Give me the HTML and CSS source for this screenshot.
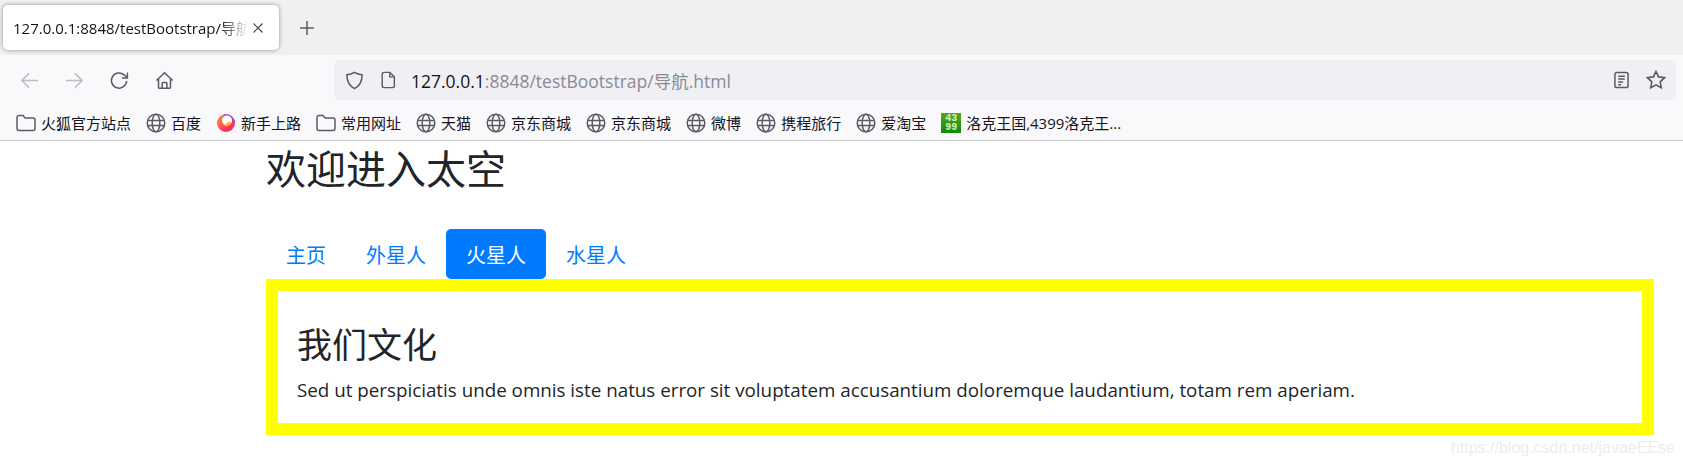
FILE: index.html
```html
<!DOCTYPE html>
<html lang="zh-CN">

<head>
  <meta charset="UTF-8">
  <title>127.0.0.1:8848/testBootstrap/导航.html</title>
  <link rel="stylesheet" href="styles.css">
</head>

<body>
  <div class="tab-strip">
    <div class="tab">
      <span class="tab-title">127.0.0.1:8848/testBootstrap/导航.html</span>
      <svg class="tab-close" viewBox="0 0 12 12"><path d="M1.5 1.5l9 9M10.5 1.5l-9 9" /></svg>
    </div>
    <svg class="new-tab" viewBox="0 0 16 16"><path d="M8 1v14M1 8h14" /></svg>
  </div>

  <div class="toolbar">
    <div class="nav-buttons">
      <svg class="tool-icon faded" viewBox="0 0 20 20"><path d="M19 10H2M9.500 2.500L2 10l7.500 7.500" /></svg>
      <svg class="tool-icon faded" viewBox="0 0 20 20"><path d="M1 10h17M10.500 2.500L18 10l-7.500 7.500" /></svg>
      <svg class="tool-icon" viewBox="0 0 20 20"><path d="M17.500 10.500a8 8 0 1 1-2.600-6.400L18 6.800" /><path d="M18.300 1.500v5.800h-5.800" /></svg>
      <svg class="tool-icon" viewBox="0 0 20 20"><path d="M1.500 10L10 1.800 18.500 10M3.700 8v9.200a1 1 0 0 0 1 1h10.600a1 1 0 0 0 1-1V8" /><path d="M7.500 18v-5a1 1 0 0 1 1-1h3a1 1 0 0 1 1 1v5" /></svg>
    </div>
    <div class="url-bar">
      <svg class="url-icon shield" viewBox="0 0 20 20"><path d="M10 1.500c2.500 1.600 5 2.300 8 2.500 0 6.500-2 11.500-8 14.500C4 15.500 2 10.500 2 4c3-.2 5.500-.9 8-2.500z" /></svg>
      <svg class="url-icon doc" viewBox="0 0 16 20"><path d="M3 1.500h6.500l5 5V16.500a2 2 0 0 1-2 2H3a2 2 0 0 1-2-2V3.500a2 2 0 0 1 2-2z" /><path d="M9.500 1.500v5h5" /></svg>
      <div class="url-text"><span class="url-host">127.0.0.1</span>:8848/testBootstrap/导航.html</div>
      <svg class="url-icon reader" viewBox="0 0 16 18"><rect x="1" y="1" width="14" height="16" rx="2" /><path d="M4.500 5h7M4.500 8h7M4.500 11h5M4.500 14h3" /></svg>
      <svg class="url-icon star" viewBox="0 0 20 20"><path d="M10 1.500l2.600 5.400 5.900.8-4.300 4.100 1 5.900-5.200-2.800-5.200 2.800 1-5.900L1.500 7.700l5.900-.8z" /></svg>
    </div>
  </div>

  <div class="bookmarks">
    <div class="bookmark">
      <svg class="bm-icon" viewBox="0 0 20 20"><use href="#folder" /></svg>火狐官方站点
    </div>
    <div class="bookmark">
      <svg class="bm-icon" viewBox="0 0 20 20"><use href="#globe" /></svg>百度
    </div>
    <div class="bookmark">
      <svg class="bm-icon" viewBox="0 0 20 20">
        <defs>
          <linearGradient id="foxFlame" x1="0" y1="0" x2="1" y2="1">
            <stop offset="0" stop-color="#ff9a3c" />
            <stop offset="0.6" stop-color="#ff3d5a" />
            <stop offset="1" stop-color="#e8257e" />
          </linearGradient>
        </defs>
        <circle class="fox-body" cx="10" cy="10" r="9" />
        <path class="fox-ring" d="M8 2.500a8 8 0 0 1 10 6.500" />
        <circle class="fox-inner" cx="11" cy="7.500" r="5" />
        <path class="fox-core" d="M15 9a5 5 0 0 1-9 2c2 1.500 4 .5 5-1s2.500-1.500 4-1z" />
      </svg>新手上路
    </div>
    <div class="bookmark">
      <svg class="bm-icon" viewBox="0 0 20 20"><use href="#folder" /></svg>常用网址
    </div>
    <div class="bookmark">
      <svg class="bm-icon" viewBox="0 0 20 20"><use href="#globe" /></svg>天猫
    </div>
    <div class="bookmark">
      <svg class="bm-icon" viewBox="0 0 20 20"><use href="#globe" /></svg>京东商城
    </div>
    <div class="bookmark">
      <svg class="bm-icon" viewBox="0 0 20 20"><use href="#globe" /></svg>京东商城
    </div>
    <div class="bookmark">
      <svg class="bm-icon" viewBox="0 0 20 20"><use href="#globe" /></svg>微博
    </div>
    <div class="bookmark">
      <svg class="bm-icon" viewBox="0 0 20 20"><use href="#globe" /></svg>携程旅行
    </div>
    <div class="bookmark">
      <svg class="bm-icon" viewBox="0 0 20 20"><use href="#globe" /></svg>爱淘宝
    </div>
    <div class="bookmark">
      <span class="logo-4399"><span>43</span><span>99</span></span>洛克王国,4399洛克王...
    </div>
  </div>

  <svg class="icon-defs" width="0" height="0">
    <symbol id="folder" viewBox="0 0 20 20">
      <path d="M1 15.500V4.500a2 2 0 0 1 2-2h4l2 2.500h8a2 2 0 0 1 2 2v8.500a2 2 0 0 1-2 2H3a2 2 0 0 1-2-2z" />
    </symbol>
    <symbol id="globe" viewBox="0 0 20 20">
      <circle cx="10" cy="10" r="8.800" />
      <ellipse cx="10" cy="10" rx="3.800" ry="8.800" />
      <path d="M1.500 7.500h17M1.500 12.500h17" />
    </symbol>
  </svg>

  <main class="page">
    <h1 class="page-title">欢迎进入太空</h1>
    <ul class="nav-pills">
      <li class="pill">主页</li>
      <li class="pill">外星人</li>
      <li class="pill active">火星人</li>
      <li class="pill">水星人</li>
    </ul>
    <div class="tab-panel">
      <h3>我们文化</h3>
      <p>Sed ut perspiciatis unde omnis iste natus error sit voluptatem accusantium doloremque laudantium, totam rem aperiam.</p>
    </div>
  </main>

  <div class="watermark">https://blog.csdn.net/javaeEEse</div>
</body>

</html>
```

FILE: styles.css
```css
html,
body {
  margin: 0;
  padding: 0;
  height: 465px;
  overflow: hidden;
}

body {
  font-family: "Open Sans", "Noto Sans CJK SC", sans-serif;
  color: #212529;
  background: #fff;
}

svg {
  flex: none;
  fill: none;
}

/* browser chrome */
.tab-strip {
  height: 55px;
  box-sizing: border-box;
  padding: 5px 0 0 3px;
  display: flex;
  align-items: flex-start;
  background: #f0f0f0;
}

.tab {
  width: 276px;
  height: 45px;
  box-sizing: border-box;
  padding: 0 10px;
  display: flex;
  align-items: center;
  background: #fff;
  border-radius: 5px;
  box-shadow: 0 0 4px rgba(0, 0, 0, 0.4);
}

.tab-title {
  flex: 1;
  font-size: 15px;
  white-space: nowrap;
  overflow: hidden;
  color: #15141a;
  -webkit-mask-image: linear-gradient(to right, #000 88%, transparent 100%);
  mask-image: linear-gradient(to right, #000 88%, transparent 100%);
}

.tab-close {
  width: 12px;
  height: 12px;
  margin: 0 5px 0 4px;
  stroke: #45444b;
  stroke-width: 1.200;
}

.new-tab {
  width: 16px;
  height: 16px;
  margin: 15px 0 0 20px;
  stroke: #5b5b66;
  stroke-width: 1.500;
}

.toolbar {
  height: 50px;
  box-sizing: border-box;
  display: flex;
  align-items: center;
  background: #f9f9fb;
}

.nav-buttons {
  width: 334px;
  box-sizing: border-box;
  padding-left: 20px;
  display: flex;
  gap: 26px;
}

.tool-icon {
  width: 19px;
  height: 19px;
  stroke: #5b5b66;
  stroke-width: 1.600;
}

.tool-icon.faded {
  stroke: #bdbdc2;
}

.url-bar {
  width: 1342px;
  height: 40px;
  box-sizing: border-box;
  padding: 0 10px 0 11px;
  display: flex;
  align-items: center;
  background: #f0f0f4;
  border-radius: 6px;
}

.url-icon {
  stroke: #5b5b66;
  stroke-width: 1.600;
}

.shield {
  width: 19px;
  height: 19px;
  margin-right: 17px;
}

.doc {
  width: 15px;
  height: 18px;
  margin-right: 15px;
}

.url-text {
  flex: 1;
  font-size: 17.500px;
  color: #8a8a92;
}

.url-host {
  color: #15141a;
}

.reader {
  width: 15px;
  height: 18px;
  margin-right: 17px;
}

.star {
  width: 20px;
  height: 20px;
}

.bookmarks {
  height: 36px;
  box-sizing: border-box;
  padding: 0 16px;
  display: flex;
  align-items: center;
  gap: 15px;
  background: #f9f9fb;
  border-bottom: 1px solid #ccc;
}

.bookmark {
  display: flex;
  align-items: center;
  gap: 5px;
  font-size: 15px;
  line-height: 20px;
  color: #15141a;
  white-space: nowrap;
}

.bm-icon {
  width: 20px;
  height: 20px;
  stroke: #5b5b66;
  stroke-width: 1.500;
}

.fox-body {
  fill: url(#foxFlame);
  stroke: none;
}

.fox-ring {
  stroke: #8c4bff;
  stroke-width: 2;
}

.fox-inner {
  fill: #fff;
  stroke: none;
}

.fox-core {
  fill: #ffb02e;
  stroke: none;
}

.icon-defs {
  position: absolute;
}

.logo-4399 {
  width: 20px;
  height: 20px;
  display: flex;
  flex-direction: column;
  align-items: center;
  justify-content: center;
  font-family: "Liberation Mono", monospace;
  font-size: 10px;
  font-weight: bold;
  line-height: 9px;
  color: #d5f0c0;
  background: linear-gradient(to bottom, #55a81c, #118a0a);
}

/* page content */
.page {
  margin: 0 29px 0 266px;
}

.page-title {
  margin: 0;
  height: 60px;
  font-size: 40px;
  font-weight: 400;
  line-height: 56px;
}

.nav-pills {
  margin: 28px 0 0;
  padding: 0;
  list-style: none;
  display: flex;
}

.pill {
  width: 100px;
  height: 50px;
  box-sizing: border-box;
  padding: 0 20px;
  display: flex;
  align-items: center;
  justify-content: center;
  font-size: 20px;
  color: #007bff;
  border-radius: 5px;
}

.pill:first-child {
  width: 80px;
}

.pill.active {
  color: #fff;
  background: #007bff;
}

.tab-panel {
  height: 156px;
  box-sizing: border-box;
  padding: 33px 19px 0;
  border: 12px solid #ff0;
}

.tab-panel h3 {
  margin: 0 0 11px;
  font-size: 35px;
  font-weight: 400;
  line-height: 42px;
}

.tab-panel p {
  margin: 0;
  font-size: 18.800px;
  line-height: 27px;
}

.watermark {
  position: absolute;
  right: 8px;
  top: 439px;
  font-family: "Liberation Sans", sans-serif;
  font-size: 16px;
  color: #ededed;
}
```
